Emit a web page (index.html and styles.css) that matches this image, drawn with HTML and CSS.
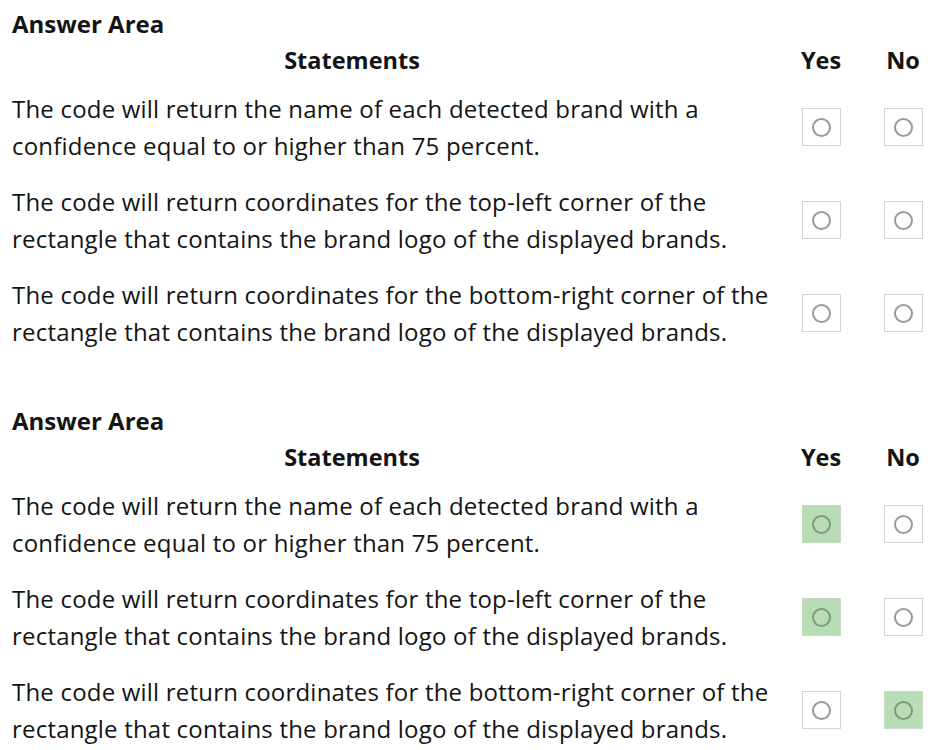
FILE: index.html
```html
<!DOCTYPE html>
<html>
<head>
<meta charset="utf-8">
<link rel="stylesheet" href="styles.css">
</head>
<body>
<section class="area">
  <h2 class="title">Answer Area</h2>
  <div class="grid">
    <div class="hd-stmt">Statements</div>
    <div class="hd-opt">Yes</div>
    <div class="hd-opt">No</div>

    <div class="stmt">The code will return the name of each detected brand with a<br>confidence equal to or higher than 75 percent.</div>
    <div class="opt"><span class="box"><span class="dot"></span></span></div>
    <div class="opt"><span class="box"><span class="dot"></span></span></div>

    <div class="stmt">The code will return coordinates for the top-left corner of the<br>rectangle that contains the brand logo of the displayed brands.</div>
    <div class="opt"><span class="box"><span class="dot"></span></span></div>
    <div class="opt"><span class="box"><span class="dot"></span></span></div>

    <div class="stmt">The code will return coordinates for the bottom-right corner of the<br>rectangle that contains the brand logo of the displayed brands.</div>
    <div class="opt"><span class="box"><span class="dot"></span></span></div>
    <div class="opt"><span class="box"><span class="dot"></span></span></div>
  </div>
</section>

<section class="area second">
  <h2 class="title">Answer Area</h2>
  <div class="grid">
    <div class="hd-stmt">Statements</div>
    <div class="hd-opt">Yes</div>
    <div class="hd-opt">No</div>

    <div class="stmt">The code will return the name of each detected brand with a<br>confidence equal to or higher than 75 percent.</div>
    <div class="opt"><span class="box sel"><span class="dot"></span></span></div>
    <div class="opt"><span class="box"><span class="dot"></span></span></div>

    <div class="stmt">The code will return coordinates for the top-left corner of the<br>rectangle that contains the brand logo of the displayed brands.</div>
    <div class="opt"><span class="box sel"><span class="dot"></span></span></div>
    <div class="opt"><span class="box"><span class="dot"></span></span></div>

    <div class="stmt">The code will return coordinates for the bottom-right corner of the<br>rectangle that contains the brand logo of the displayed brands.</div>
    <div class="opt"><span class="box"><span class="dot"></span></span></div>
    <div class="opt"><span class="box sel"><span class="dot"></span></span></div>
  </div>
</section>
</body>
</html>
```

FILE: styles.css
```css
html, body {
  margin: 0;
  padding: 0;
  background: #fff;
  overflow: hidden;
}
body {
  font-family: "Open Sans", "Noto Sans", sans-serif;
  color: #141414;
  padding: 9px 0 0 12px;
  width: 930px;
}
.area.second {
  margin-top: 56px;
}
.title {
  margin: 0;
  font-size: 24px;
  line-height: 30px;
  font-weight: 700;
}
.grid {
  display: grid;
  grid-template-columns: 766px 86px 78px;
  row-gap: 19px;
  margin-top: 6px;
}
.hd-stmt {
  font-size: 23.5px;
  font-weight: 700;
  line-height: 30px;
  text-align: center;
  padding-right: 86px;
  margin-bottom: -4px;
}
.hd-opt {
  font-size: 23.5px;
  font-weight: 700;
  line-height: 30px;
  text-align: center;
  margin-bottom: -4px;
}
.stmt {
  font-size: 24px;
  line-height: 37px;
  white-space: nowrap;
  letter-spacing: 0.2px;
}
.opt {
  display: flex;
  align-items: center;
  justify-content: center;
}
.box {
  width: 37px;
  height: 36px;
  border: 1px solid #d4d4d4;
  background: #fff;
  display: flex;
  align-items: center;
  justify-content: center;
}
.box.sel {
  background: #b8dcb4;
  border-color: #c6dcc3;
}
.dot {
  width: 15px;
  height: 15px;
  border: 2px solid #9a9a9a;
  border-radius: 50%;
}
.box.sel .dot {
  border-color: #7e9c7b;
}
```
